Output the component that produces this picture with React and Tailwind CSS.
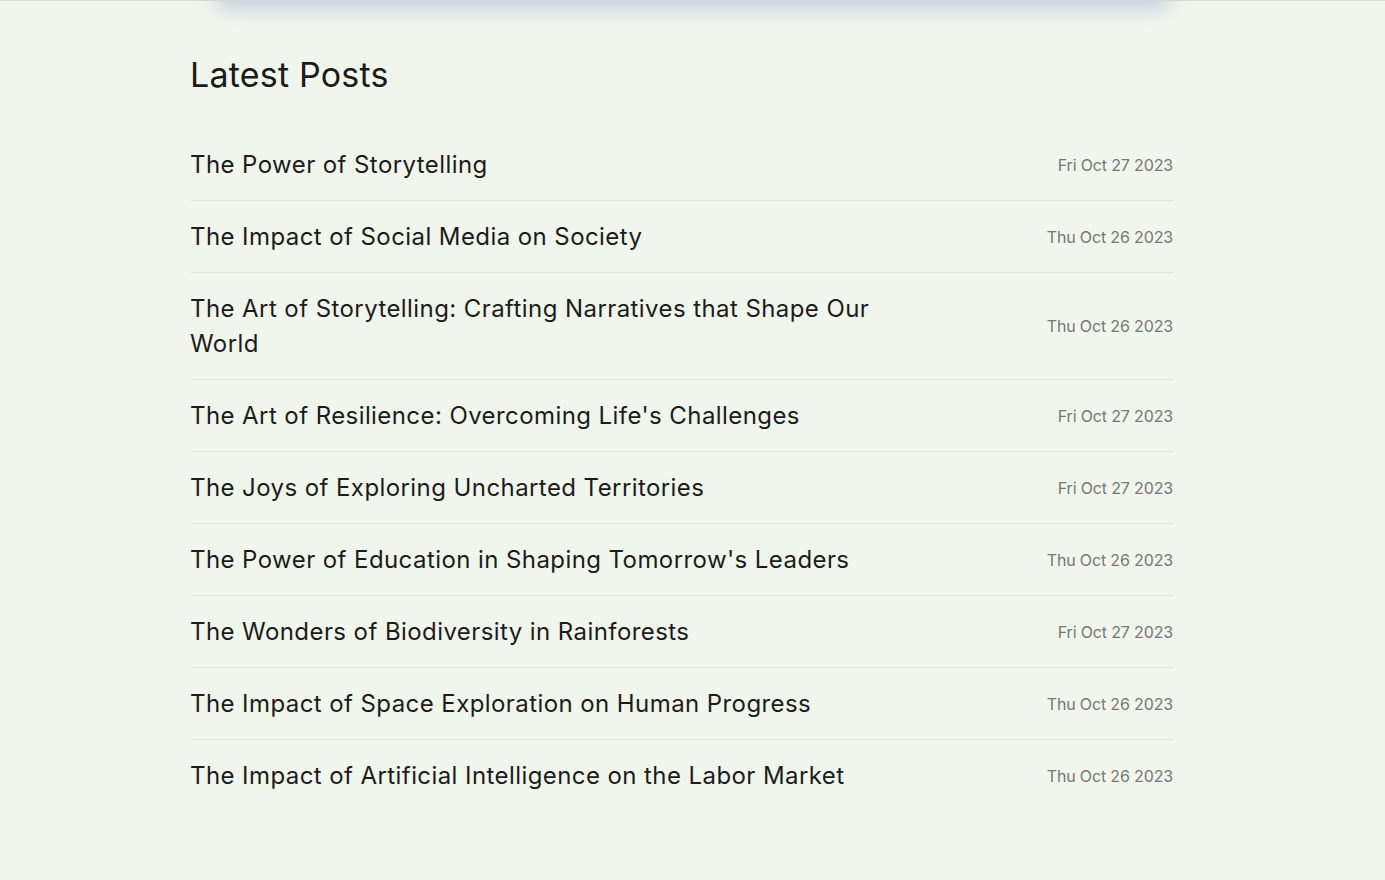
const posts = [
  ["The Power of Storytelling", "Fri Oct 27 2023"],
  ["The Impact of Social Media on Society", "Thu Oct 26 2023"],
  ["The Art of Storytelling: Crafting Narratives that Shape Our World", "Thu Oct 26 2023"],
  ["The Art of Resilience: Overcoming Life's Challenges", "Fri Oct 27 2023"],
  ["The Joys of Exploring Uncharted Territories", "Fri Oct 27 2023"],
  ["The Power of Education in Shaping Tomorrow's Leaders", "Thu Oct 26 2023"],
  ["The Wonders of Biodiversity in Rainforests", "Fri Oct 27 2023"],
  ["The Impact of Space Exploration on Human Progress", "Thu Oct 26 2023"],
  ["The Impact of Artificial Intelligence on the Labor Market", "Thu Oct 26 2023"],
];

export default function App() {
  return (
    <div
      className="relative min-h-[880px] bg-[#f1f6ed] border-t border-[#d6d8d6] overflow-hidden"
      style={{ fontFamily: "Inter, 'Noto Sans', sans-serif" }}
    >
      <div className="absolute left-1/2 -translate-x-1/2 -top-[30px] h-[30px] w-[950px] shadow-[0_6px_22px_rgba(90,100,190,0.32)] bg-[#f1f6ed]"></div>
      <div className="w-[982px] ml-[191px] pt-[50px]">
        <h2 className="-ml-px text-[34px] leading-[48px] font-normal text-[#1b1b1b] tracking-[0.2px] mb-[30px]">
          Latest Posts
        </h2>
        <ul>
          {posts.map(([title, date], i) => (
            <li
              key={i}
              className="flex items-center justify-between py-[18px] border-b border-[#e1e4de] last:border-b-0"
            >
              <span className="-ml-px max-w-[710px] text-[24px] leading-[35px] text-[#1c1c1c] tracking-[0.42px]">
                {title}
              </span>
              <span className="text-[16px] leading-[24px] text-[#767676] tracking-[-0.15px] whitespace-nowrap">
                {date}
              </span>
            </li>
          ))}
        </ul>
      </div>
    </div>
  );
}
